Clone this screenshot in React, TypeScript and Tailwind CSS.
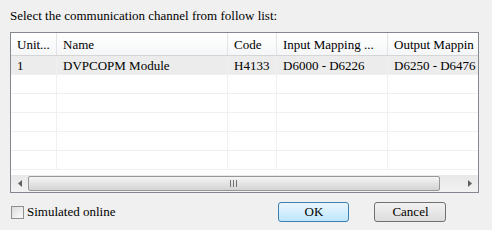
import React from 'react';

const COLS = [
  { label: 'Unit...', w: 'w-[46px]' },
  { label: 'Name', w: 'w-[171px]' },
  { label: 'Code', w: 'w-[49px]' },
  { label: 'Input Mapping ...', w: 'w-[111px]' },
  { label: 'Output Mappin', w: 'w-[110px]' },
];

const ROW = ['1', 'DVPCOPM Module', 'H4133', 'D6000 - D6226', 'D6250 - D6476'];

const Row = ({ cells, active }: { cells: string[]; active?: boolean }) => (
  <div className={`flex h-[19px] shrink-0 border-b border-[#f0f0f0] ${active ? 'bg-[#ececec]' : ''}`}>
    {COLS.map((c, i) => (
      <div
        key={i}
        className={`${c.w} shrink-0 border-r border-[#f0f0f0] px-[6px] leading-[19px] whitespace-nowrap overflow-hidden`}
      >
        {cells[i] || ''}
      </div>
    ))}
  </div>
);

export default function App() {
  return (
    <div className="w-[492px] h-[230px] bg-[#f0f0f0] font-['Liberation_Serif'] text-[13px] text-black overflow-hidden flex flex-col">
      <div className="pl-[10px] pt-[8px] leading-[15px]">Select the communication channel from follow list:</div>

      {/* List view */}
      <div className="ml-[10px] mt-[9px] w-[469px] h-[161px] border border-[#828790] bg-white flex flex-col overflow-hidden">
        <div className="flex h-[23px] shrink-0 bg-gradient-to-b from-white to-[#f5f6f7] border-b border-[#d5d5d5]">
          {COLS.map((c, i) => (
            <div
              key={i}
              className={`${c.w} shrink-0 border-r border-[#e3e4e6] px-[6px] leading-[23px] whitespace-nowrap overflow-hidden`}
            >
              {c.label}
            </div>
          ))}
        </div>
        <div className="flex-1 flex flex-col overflow-hidden">
          <Row cells={ROW} active />
          {[0, 1, 2, 3, 4].map((i) => (
            <Row key={i} cells={[]} />
          ))}
        </div>

        {/* Horizontal scrollbar */}
        <div className="h-[17px] shrink-0 flex bg-gradient-to-b from-[#e8e8e8] to-[#f2f2f2]">
          <div className="w-[17px] flex items-center justify-center">
            <svg width="4" height="7" viewBox="0 0 4 7">
              <path d="M4 0 L0 3.5 L4 7 Z" fill="#606060" />
            </svg>
          </div>
          <div className="w-[412px] my-[1px] rounded-[2px] border border-[#979797] bg-gradient-to-b from-[#f4f4f4] via-[#e4e4e4] to-[#d4d4d4] flex items-center justify-center">
            <svg width="8" height="7" viewBox="0 0 8 7">
              <rect x="0" y="0" width="1" height="7" fill="#707070" />
              <rect x="3" y="0" width="1" height="7" fill="#707070" />
              <rect x="6" y="0" width="1" height="7" fill="#707070" />
            </svg>
          </div>
          <div className="flex-1" />
          <div className="w-[17px] flex items-center justify-center">
            <svg width="4" height="7" viewBox="0 0 4 7">
              <path d="M0 0 L4 3.5 L0 7 Z" fill="#606060" />
            </svg>
          </div>
        </div>
      </div>

      {/* Bottom bar */}
      <div className="flex items-center mt-[9px] pl-[11px]">
        <div className="w-[13px] h-[13px] border border-[#8e8f8f] bg-gradient-to-br from-[#dcdcdc] to-[#fbfbfb]" />
        <span className="ml-[3px]">Simulated online</span>
        <button className="ml-[163px] w-[71px] h-[20px] rounded-[3px] border border-[#3c7fb1] bg-gradient-to-b from-[#eaf6fd] to-[#bee6fd] leading-[18px]">
          OK
        </button>
        <button className="ml-[25px] w-[72px] h-[20px] rounded-[3px] border border-[#707070] bg-gradient-to-b from-[#f2f2f2] to-[#dddddd] leading-[18px]">
          Cancel
        </button>
      </div>
    </div>
  );
}
